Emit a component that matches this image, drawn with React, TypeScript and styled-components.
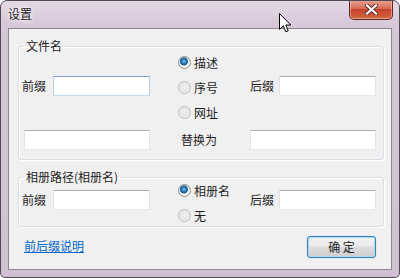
import styled, { createGlobalStyle } from "styled-components";

const GlobalStyle = createGlobalStyle`
  html, body { margin: 0; padding: 0; background: #ffffff; }
  body {
    font-family: "Noto Sans CJK SC", "Microsoft YaHei", sans-serif;
    font-size: 12px;
    color: #1e1e1e;
  }
`;

const Window = styled.div`
  position: relative;
  width: 400px;
  height: 278px;
  box-sizing: border-box;
  border: 1px solid #4d4a50;
  border-radius: 7px 7px 5px 5px;
  background: linear-gradient(#e3d8e5, #d6c6d8 26px, #d1c0d4);
  display: flex;
  flex-direction: column;
  overflow: hidden;
`;

const TitleBar = styled.div`
  height: 27px;
  flex: none;
  display: flex;
  align-items: flex-start;
  padding-left: 7px;
`;

const Title = styled.span`
  margin-top: 5px;
  line-height: 16px;
  font-size: 12px;
  color: #1a1a1a;
  text-shadow: 0 0 6px #ffffff, 0 0 3px #ffffff;
`;

const CloseButton = styled.div`
  margin-left: auto;
  margin-right: 6px;
  margin-top: -1px;
  width: 44px;
  height: 20px;
  box-sizing: border-box;
  border: 1px solid #5a2b26;
  border-top: none;
  border-radius: 0 0 5px 5px;
  background: linear-gradient(#e9a596, #d76a55 45%, #c5432c 50%, #d3653f 100%);
  box-shadow: inset 0 0 0 1px rgba(255, 200, 190, 0.55);
  display: flex;
  align-items: center;
  justify-content: center;
`;

const Cursor = styled.svg`
  position: absolute;
  left: 278px;
  top: 12px;
`;

const Client = styled.div`
  flex: 1;
  margin: 0 7px 7px 7px;
  background: #f0f0f0;
  border: 1px solid #8c8790;
  padding: 10px 7px 0 9px;
  display: flex;
  flex-direction: column;
`;

const Group = styled.fieldset<{ $gapTop?: number; $padBottom: number }>`
  margin: ${(p) => p.$gapTop ?? 0}px 0 0 0;
  padding: 0 7px ${(p) => p.$padBottom}px 3px;
  border: 1px solid #d5dfe5;
  border-radius: 3px;
  box-shadow: inset 1px 1px 0 #ffffff, 1px 1px 0 #ffffff;
  min-width: 0;
`;

const Legend = styled.legend`
  padding: 0 3px;
  margin-left: 1px;
  line-height: 14px;
  font-size: 12px;
`;

const Grid = styled.div`
  display: grid;
  grid-template-columns: 31px 97px 28px 72px 29px 97px;
  row-gap: 11px;
  align-items: center;
`;

const Label = styled.span<{ $top?: number }>`
  line-height: 14px;
  white-space: nowrap;
  ${(p) => (p.$top !== undefined ? `align-self: start; margin-top: ${p.$top}px;` : "")}
`;

const Input = styled.div<{ $focus?: boolean; $span?: string; $indent?: number; $top?: number }>`
  grid-column: ${(p) => p.$span ?? "auto"};
  margin-left: ${(p) => p.$indent ?? 0}px;
  ${(p) => (p.$top !== undefined ? `align-self: start; margin-top: ${p.$top}px;` : "")}
  height: 20px;
  box-sizing: border-box;
  background: #ffffff;
  border: 1px solid ${(p) => (p.$focus ? "#b5cfe7" : "#e2e3ea")};
  border-top-color: ${(p) => (p.$focus ? "#7da2ce" : "#abadb3")};
  border-bottom-color: ${(p) => (p.$focus ? "#c3d9ee" : "#e3e9ef")};
  border-radius: 1px;
`;

const RadioColumn = styled.div<{ $padTop: number }>`
  grid-column: 3 / 5;
  grid-row: 1;
  padding-top: ${(p) => p.$padTop}px;
  padding-left: 28px;
  display: flex;
  flex-direction: column;
  gap: 12px;
`;

const RadioItem = styled.div`
  display: flex;
  align-items: center;
  gap: 3px;
  height: 13px;
  line-height: 13px;
`;

const RadioDot = styled.span<{ $checked?: boolean }>`
  width: 13px;
  height: 13px;
  box-sizing: border-box;
  border-radius: 50%;
  border: 1px solid ${(p) => (p.$checked ? "#8e8f8f" : "#bdbdbd")};
  background: ${(p) =>
    p.$checked
      ? "radial-gradient(circle at 45% 40%, #8fd0f4 0, #2a7fc0 2px, #1c5a8e 3.5px, #eaeaea 4.5px, #f6f6f6 6px)"
      : "radial-gradient(circle at 50% 45%, #f4f4f4 0, #e4e4e4 4px, #f2f2f2 6px)"};
  flex: none;
`;

const ReplaceLabel = styled(Label)`
  grid-column: 3 / 5;
  padding-left: 31px;
`;

const Footer = styled.div`
  display: flex;
  align-items: center;
  justify-content: space-between;
  margin-top: 9px;
  padding: 0 8px 0 6px;
`;

const HelpLink = styled.a`
  color: #0066cc;
  text-decoration: underline;
  line-height: 14px;
  margin-top: -2px;
  cursor: pointer;
`;

const OkButton = styled.button`
  width: 69px;
  height: 22px;
  box-sizing: border-box;
  border: 1px solid #3c7fb1;
  border-radius: 3px;
  background: linear-gradient(#f2f2f2 0%, #ebebeb 45%, #dddddd 50%, #cfcfcf 100%);
  box-shadow: inset 0 0 0 1px #a8dbf5, 0 0 1px #7ec4ea;
  font-family: inherit;
  font-size: 12px;
  color: #1e1e1e;
  padding: 0;
  line-height: 18px;
`;

export default function App() {
  return (
    <>
      <GlobalStyle />
      <Window>
        <TitleBar>
          <Title>设置</Title>
          <CloseButton>
            <svg width="13" height="11" viewBox="0 0 13 11">
              <path
                d="M2 1.5 L11 9.5 M11 1.5 L2 9.5"
                stroke="#5b2a24"
                strokeWidth="4"
                strokeLinecap="square"
              />
              <path
                d="M2 1.5 L11 9.5 M11 1.5 L2 9.5"
                stroke="#ffffff"
                strokeWidth="2.2"
                strokeLinecap="square"
              />
            </svg>
          </CloseButton>
        </TitleBar>
        <Client>
          <Group $padBottom={9}>
            <Legend>文件名</Legend>
            <Grid>
              <Label>前缀</Label>
              <Input $focus />
              <RadioColumn $padTop={3}>
                <RadioItem>
                  <RadioDot $checked />
                  描述
                </RadioItem>
                <RadioItem>
                  <RadioDot />
                  序号
                </RadioItem>
                <RadioItem>
                  <RadioDot />
                  网址
                </RadioItem>
              </RadioColumn>
              <Label>后缀</Label>
              <Input />
              <Input $span="1 / 3" $indent={2} />
              <ReplaceLabel>替换为</ReplaceLabel>
              <Input $span="5 / 7" />
            </Grid>
          </Group>
          <Group $gapTop={10} $padBottom={4}>
            <Legend>相册路径(相册名)</Legend>
            <Grid>
              <Label $top={9}>前缀</Label>
              <Input $top={6} />
              <RadioColumn $padTop={0}>
                <RadioItem>
                  <RadioDot $checked />
                  相册名
                </RadioItem>
                <RadioItem>
                  <RadioDot />
                  无
                </RadioItem>
              </RadioColumn>
              <Label $top={9}>后缀</Label>
              <Input $top={6} />
            </Grid>
          </Group>
          <Footer>
            <HelpLink>前后缀说明</HelpLink>
            <OkButton>确 定</OkButton>
          </Footer>
        </Client>
        <Cursor width="13" height="21" viewBox="0 0 13 21">
          <path
            d="M0.5 0.5 L0.5 16.5 L4.3 12.8 L6.8 18.8 L9.2 17.8 L6.8 12 L11.8 12 Z"
            fill="#ffffff"
            stroke="#000000"
            strokeWidth="1"
            strokeLinejoin="miter"
          />
        </Cursor>
      </Window>
    </>
  );
}
